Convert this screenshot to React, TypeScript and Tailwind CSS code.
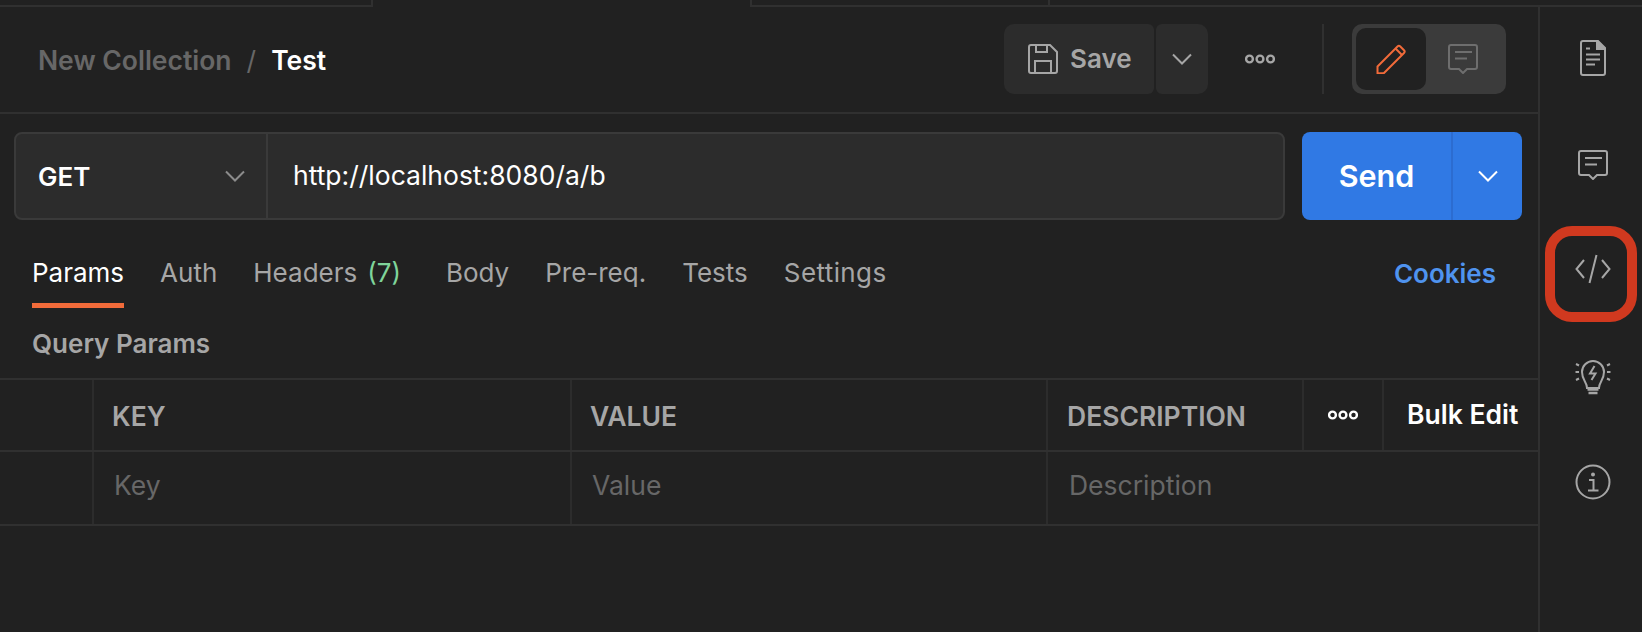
import type { ReactNode } from "react";

function Chevron({ className }: { className?: string }) {
  return (
    <svg width="20" height="12" viewBox="0 0 20 12" fill="none" stroke="currentColor" strokeWidth="2" className={className}>
      <path d="M1 1.5 10 10.5 19 1.5" />
    </svg>
  );
}

function Dots({ className }: { className?: string }) {
  return (
    <svg width="30" height="12" viewBox="0 0 30 12" fill="none" stroke="currentColor" strokeWidth="2.4" className={className}>
      <circle cx="4.500" cy="6" r="3.400" />
      <circle cx="15" cy="6" r="3.400" />
      <circle cx="25.500" cy="6" r="3.400" />
    </svg>
  );
}

function CommentIcon({ className }: { className?: string }) {
  return (
    <svg width="30" height="30" viewBox="0 0 30 30" fill="none" stroke="currentColor" strokeWidth="2" className={className}>
      <path d="M3 1h24a2 2 0 0 1 2 2v20a2 2 0 0 1-2 2h-8l-4 4-4-4H3a2 2 0 0 1-2-2V3a2 2 0 0 1 2-2z" />
      <path d="M7 8h17M7 14.500h12" />
    </svg>
  );
}

function Tab({ children, active }: { children: ReactNode; active?: boolean }) {
  return (
    <div
      className={
        "flex h-[55px] items-center border-b-[5px] pb-[12px] " +
        (active ? "border-[#f26b3a] text-white" : "border-transparent text-[#a6a6a6]")
      }
    >
      {children}
    </div>
  );
}

function SideIcon({ children }: { children: ReactNode }) {
  return <div className="flex h-[105.5px] w-full items-center justify-center text-[#a6a6a6]">{children}</div>;
}

export default function App() {
  return (
    <div className="flex h-[632px] w-[1642px] flex-col overflow-hidden bg-[#212121] font-['Inter',sans-serif]">
      {/* TAB STRIP */}
      <div className="flex h-[7px] shrink-0">
        <div className="w-[373px] border-r-2 border-b-2 border-[#303030]" />
        <div className="w-[377px]" />
        <div className="flex flex-1 border-b-2 border-l-2 border-[#303030]">
          <div className="w-[298px] border-r-2 border-[#303030]" />
        </div>
      </div>

      <div className="flex flex-1">
        <div className="w-[1538px] shrink-0">
          {/* TITLE BAR */}
          <div className="flex h-[107px] items-center border-b-2 border-[#303030] pr-[32px] pb-[2px] pl-[38px]">
            <div className="flex flex-1 items-center pt-[4px] text-[26.500px] font-semibold">
              <span className="text-[#676767]">New Collection</span>
              <span className="mx-[15px] font-normal text-[#676767]">/</span>
              <span className="text-white">Test</span>
            </div>
            <div className="flex h-[70px] w-[150px] items-center rounded-l-[10px] rounded-r-[6px] bg-[#2c2c2c] pl-[24px] text-[#a6a6a6]">
              <svg width="30" height="30" viewBox="0 0 30 30" fill="none" stroke="currentColor" strokeWidth="2">
                <path d="M3 1h19l7 7v19a2 2 0 0 1-2 2H3a2 2 0 0 1-2-2V3a2 2 0 0 1 2-2z" />
                <path d="M8 1v7h11V1M7 29V17h16v12" />
              </svg>
              <span className="ml-[12px] text-[26px] font-semibold">Save</span>
            </div>
            <div className="ml-[2px] flex h-[70px] w-[52px] items-center justify-center rounded-l-[6px] rounded-r-[10px] bg-[#2c2c2c] text-[#a6a6a6]">
              <Chevron />
            </div>
            <div className="ml-[37px] flex w-[30px] justify-center text-[#a6a6a6]">
              <Dots />
            </div>
            <div className="ml-[47px] h-[70px] w-[2px] bg-[#303030]" />
            <div className="ml-[28px] flex h-[70px] w-[154px] items-center rounded-[10px] bg-[#3b3b3b] pl-[4px]">
              <div className="flex h-[62px] w-[70px] items-center justify-center rounded-[10px] bg-[#212121] text-[#f26b3a]">
                <svg width="30" height="30" viewBox="0 0 30 30" fill="none" stroke="currentColor" strokeWidth="2" strokeLinejoin="round">
                  <path d="M1.500 22.500 21.500 2.500a2 2 0 0 1 2.800 0l3.700 3.700a2 2 0 0 1 0 2.800L8 29l-6.500 0.500z" />
                  <path d="M19.500 4.500 26 11" />
                </svg>
              </div>
              <CommentIcon className="ml-[22px] text-[#6e6e6e]" />
            </div>
          </div>

          {/* URL BAR */}
          <div className="flex items-center gap-[17px] pt-[18px] pr-[16px] pl-[14px]">
            <div className="flex h-[88px] flex-1 rounded-[8px] border-2 border-[#3a3a3a] bg-[#2c2c2c]">
              <div className="flex w-[252px] items-center justify-between border-r-2 border-[#3a3a3a] pr-[21px] pl-[22px]">
                <span className="text-[26px] font-semibold text-white">GET</span>
                <Chevron className="text-[#8c8c8c]" />
              </div>
              <div className="flex flex-1 items-center pl-[25px] text-[26.500px] text-white">http://localhost:8080/a/b</div>
            </div>
            <div className="flex h-[88px] w-[220px] rounded-[8px] bg-[#3079e4] text-white">
              <div className="flex w-[149px] items-center justify-center text-[30.500px] font-semibold">Send</div>
              <div className="flex flex-1 items-center justify-center border-l-2 border-[#2c6cd0]">
                <Chevron />
              </div>
            </div>
          </div>

          {/* REQUEST TABS */}
          <div className="mt-[33px] flex items-start pr-[42px] pl-[32px] text-[26px]">
            <div className="flex flex-1 gap-[36px]">
              <Tab active>Params</Tab>
              <Tab>Auth</Tab>
              <Tab>
                Headers<span className="ml-[10px] text-[#7fd49a]">(7)</span>
                <span className="w-[9px]" />
              </Tab>
              <Tab>Body</Tab>
              <Tab>Pre-req.</Tab>
              <Tab>Tests</Tab>
              <Tab>
                <span className="tracking-[0.4px]">Settings</span>
              </Tab>
            </div>
            <div className="flex h-[55px] items-center pb-[15px] text-[26px] font-semibold text-[#4f93ef]">Cookies</div>
          </div>

          <div className="flex h-[70px] items-center pl-[32px] text-[26px] font-semibold text-[#a6a6a6]">Query Params</div>

          {/* PARAMS TABLE */}
          <div className="border-t-2 border-[#303030]">
            <div className="flex h-[72px] border-b-2 border-[#303030] text-[26.500px] font-semibold text-[#a6a6a6]">
              <div className="w-[94px] border-r-2 border-[#2c2c2c]" />
              <div className="flex w-[478px] items-center border-r-2 border-[#2c2c2c] pt-[3px] pl-[18px]">KEY</div>
              <div className="flex w-[476px] items-center border-r-2 border-[#2c2c2c] pt-[3px] pl-[18px]">VALUE</div>
              <div className="flex w-[256px] items-center border-r-2 border-[#2c2c2c] pt-[3px] pl-[19px]">DESCRIPTION</div>
              <div className="flex w-[80px] items-center justify-center border-r-2 border-[#2c2c2c] text-white">
                <Dots />
              </div>
              <div className="flex flex-1 items-center pl-[23px] text-white">Bulk Edit</div>
            </div>
            <div className="flex h-[74px] border-b-2 border-[#303030] text-[26.500px] text-[#676767]">
              <div className="w-[94px] border-r-2 border-[#2c2c2c]" />
              <div className="flex w-[478px] items-center border-r-2 border-[#2c2c2c] pb-[4px] pl-[20px]">Key</div>
              <div className="flex w-[476px] items-center border-r-2 border-[#2c2c2c] pb-[4px] pl-[20px]">Value</div>
              <div className="flex flex-1 items-center pb-[4px] pl-[21px]">Description</div>
            </div>
          </div>
        </div>

        {/* SIDE PANEL */}
        <div className="flex flex-1 flex-col items-center border-l-2 border-[#303030] pl-[4px]">
          <SideIcon>
            <svg width="26" height="36" viewBox="0 0 26 36" fill="none" stroke="currentColor" strokeWidth="2" className="mb-[4px]">
              <path d="M3 1h14l8 8v24a2 2 0 0 1-2 2H3a2 2 0 0 1-2-2V3a2 2 0 0 1 2-2z" />
              <path d="M17 1h1l7 7v1h-8z" fill="currentColor" />
              <path d="M6 8.500h4M6 14.500h14M6 19.500h14M6 24.500h9" />
            </svg>
          </SideIcon>
          <SideIcon>
            <CommentIcon />
          </SideIcon>
          <div className="relative flex h-[105.500px] w-full items-center justify-center text-[#a6a6a6]">
            <svg width="36" height="30" viewBox="0 0 36 30" fill="none" stroke="currentColor" strokeWidth="2" className="mb-[3px]">
              <path d="M9 6 1.500 15 9 24M27 6l7.500 9L27 24M21.500 1 14.500 29" />
            </svg>
            <div className="absolute top-[8px] left-[1px] h-[96px] w-[92px] rounded-[27px] border-[10px] border-[#d0391f]" />
          </div>
          <SideIcon>
            <svg width="36" height="38" viewBox="0 0 36 38" fill="none" stroke="currentColor" strokeWidth="2" className="mt-[2px]">
              <path d="M12 30c0-6-5-8-5-16a11 11 0 0 1 22 0c0 8-5 10-5 16z" />
              <path d="M19.500 8 15 15.500h5.500L16.500 22" />
              <path d="M12.500 31.500h11M13.500 35h9" strokeWidth="2.600" />
              <path d="M0.500 14h3.500M32 14h3.500M1 6l3 1.500M35 6l-3 1.500M1 22l3-1.500M35 22l-3-1.500" />
            </svg>
          </SideIcon>
          <SideIcon>
            <svg width="36" height="36" viewBox="0 0 36 36" fill="none" stroke="currentColor" strokeWidth="2">
              <circle cx="18" cy="18" r="16.500" />
              <circle cx="18" cy="10.500" r="2" fill="currentColor" stroke="none" />
              <path d="M14 16h4.500v10M13 26.500h10.500" />
            </svg>
          </SideIcon>
        </div>
      </div>
    </div>
  );
}
